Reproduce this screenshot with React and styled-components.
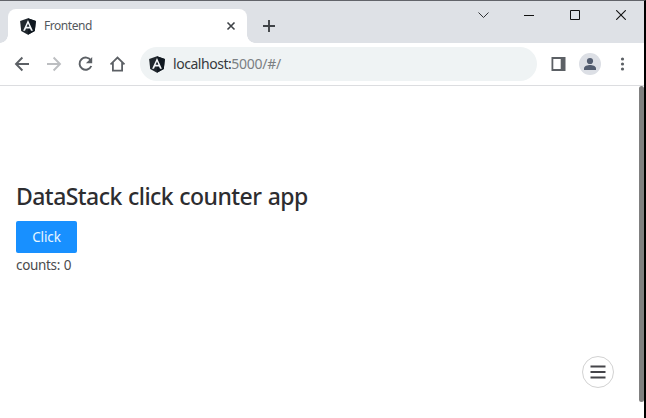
import React from "react";
import styled, { createGlobalStyle } from "styled-components";

const Global = createGlobalStyle`
  * { box-sizing: border-box; }
  body { margin: 0; background: #fff; font-family: "Noto Sans", "Open Sans", sans-serif; overflow: hidden; }
  svg { display: block; flex: none; }
`;

const Window = styled.div`
  width: 646px;
  height: 418px;
  display: flex;
  flex-direction: column;
  background: #fff;
  border-top: 1px solid #62646a;
  border-right: 2px solid #000;
`;

const TitleBar = styled.header`
  height: 42px;
  flex: none;
  display: flex;
  align-items: flex-end;
  padding-left: 8px;
  background: #dee1e6;
`;

const Tab = styled.div`
  position: relative;
  width: 239px;
  height: 34px;
  display: flex;
  align-items: center;
  padding: 0 11px 0 12px;
  background: #fff;
  border-radius: 8px 8px 0 0;
  &::before, &::after {
    content: "";
    position: absolute;
    bottom: 0;
    width: 8px;
    height: 8px;
  }
  &::before {
    left: -8px;
    background: radial-gradient(circle at 0 0, transparent 7.5px, #fff 8px);
  }
  &::after {
    right: -8px;
    background: radial-gradient(circle at 100% 0, transparent 7.5px, #fff 8px);
  }
`;

const TabTitle = styled.span`
  flex: 1;
  margin-left: 8px;
  font-size: 12px;
  line-height: 16px;
  letter-spacing: -0.45px;
  color: #54585c;
`;

const NewTab = styled.div`
  width: 28px;
  height: 34px;
  margin-left: 8px;
  display: flex;
  align-items: center;
  justify-content: center;
`;

const WindowControls = styled.div`
  align-self: flex-start;
  margin-left: auto;
  display: flex;
  height: 28px;
`;

const Control = styled.div`
  width: 46px;
  height: 28px;
  display: flex;
  align-items: center;
  justify-content: center;
`;

const Toolbar = styled.nav`
  height: 43px;
  flex: none;
  display: flex;
  align-items: center;
  padding: 0 11px 0 14px;
  border-bottom: 1px solid #dcdde0;
`;

const NavIcons = styled.div`
  display: flex;
  gap: 16px;
`;

const AddressBar = styled.div`
  width: 397px;
  height: 34px;
  margin-left: 14px;
  padding-left: 9px;
  display: flex;
  align-items: center;
  border-radius: 17px;
  background: #eff3f4;
`;

const Url = styled.span`
  margin-left: 8px;
  font-size: 14px;
  line-height: 20px;
  letter-spacing: -0.46px;
  color: #36393d;
`;

const UrlRest = styled.span`
  letter-spacing: -0.25px;
  color: #7b7f83;
`;

const Actions = styled.div`
  margin-left: auto;
  display: flex;
  align-items: center;
  gap: 12px;
`;

const Page = styled.main`
  flex: 1;
  min-height: 0;
  display: flex;
`;

const Content = styled.section`
  flex: 1;
  padding: 95px 0 0 16px;
`;

const Heading = styled.h1`
  margin: 0;
  font-size: 23px;
  font-weight: 500;
  line-height: 30px;
  letter-spacing: -0.55px;
  word-spacing: 0.8px;
  color: #2d2d30;
  white-space: nowrap;
`;

const ClickButton = styled.button`
  display: block;
  width: 61px;
  height: 32px;
  margin: 10px 0 0;
  padding: 0;
  border: 0;
  border-radius: 2px;
  background: #1890ff;
  color: #e8f7ff;
  font: 13.5px/32px "Noto Sans", sans-serif;
  letter-spacing: -0.1px;
`;

const Counter = styled.p`
  margin: 1px 0 0;
  font-size: 13.5px;
  line-height: 22px;
  letter-spacing: -0.32px;
  word-spacing: 0.5px;
  color: #4b4b4d;
`;

const Scrollbar = styled.div`
  width: 5px;
  height: 316px;
  border-radius: 3px;
  background: #808080;
`;

const MenuButton = styled.div`
  position: absolute;
  left: 582px;
  top: 356px;
  width: 32px;
  height: 32px;
  display: flex;
  align-items: center;
  justify-content: center;
  border: 1px solid #d2d2d2;
  border-radius: 50%;
  background: #fff;
`;

const Shield = () => (
  <svg width="16" height="17" viewBox="0 0 16 17">
    <path d="M8 0.2 15.9 2.9 14.8 13 8 16.7 1.2 13 0.1 2.9Z" fill="#20272d" />
    <path d="M8 0.2 15.9 2.9 14.8 13 8 16.7Z" fill="#101820" />
    <path fillRule="evenodd" d="M8 2 3.1 12.8H5L6 10.4H10L11 12.8H12.9ZM8 5.6 9.4 8.8H6.6Z" fill="#f4f7f9" />
  </svg>
);

const Icon = ({ children, color = "#5c6065", size = 16, width = 1.9 }) => (
  <svg width={size} height={size} viewBox={`0 0 ${size} ${size}`} fill="none" stroke={color} strokeWidth={width}>
    {children}
  </svg>
);

export default function App() {
  return (
    <Window>
      <Global />
      <TitleBar>
        <Tab>
          <Shield />
          <TabTitle>Frontend</TabTitle>
          <Icon size={10} color="#3f4347" width={1.6}><path d="M1.5 1.5 8.5 8.5M8.5 1.5 1.5 8.5" /></Icon>
        </Tab>
        <NewTab>
          <Icon size={12} color="#3f4347" width={1.9}><path d="M6 0V12M0 6H12" /></Icon>
        </NewTab>
        <WindowControls>
          <Control><Icon size={12} color="#303236" width={1}><path d="M1.5 3.5 6.5 8.5 11.5 3.5" /></Icon></Control>
          <Control><Icon size={10} color="#111" width={1}><path d="M0 5.5H10" /></Icon></Control>
          <Control><Icon size={10} color="#111" width={1}><path d="M.5.5H9.5V9.5H.5Z" /></Icon></Control>
          <Control><Icon size={10} color="#111" width={1.1}><path d="M.2.2 9.8 9.8M9.8.2.2 9.8" /></Icon></Control>
        </WindowControls>
      </TitleBar>
      <Toolbar>
        <NavIcons>
          <Icon><path d="M15 8H2.2M8.4 1.5 2 8 8.4 14.5" /></Icon>
          <Icon color="#bcbec1"><path d="M1 8H13.8M7.6 1.5 14 8 7.6 14.5" /></Icon>
          <Icon><path d="M12.9 4.5A6.1 6.1 0 1 0 13.3 10" /><path d="M14.2 1V7.3H7.9Z" fill="#5c6065" stroke="none" /></Icon>
          <Icon width={1.8}><path d="M.5 8.4 7.5 1.6 14.5 8.4M2.9 6.5V14.7H12.1V6.5" /></Icon>
        </NavIcons>
        <AddressBar>
          <Shield />
          <Url>localhost:<UrlRest>5000/#/</UrlRest></Url>
        </AddressBar>
        <Actions>
          <svg width="16" height="14" viewBox="0 0 16 14">
            <path fillRule="evenodd" d="M0.5 0H14.5V14H0.5ZM2.3 2V12H9.7V2Z" fill="#5c6065" />
          </svg>
          <svg width="22" height="22" viewBox="0 0 22 22">
            <circle cx="11" cy="11" r="11" fill="#dcdfe5" />
            <circle cx="11" cy="8" r="3.1" fill="#535d70" />
            <path d="M5 17V15.3C5 13 8.6 11.9 11 11.9S17 13 17 15.3V17Z" fill="#535d70" />
          </svg>
          <svg width="20" height="16" viewBox="0 0 20 16" fill="#5c6065">
            <circle cx="9.5" cy="3" r="1.6" /><circle cx="9.5" cy="8" r="1.6" /><circle cx="9.5" cy="13" r="1.6" />
          </svg>
        </Actions>
      </Toolbar>
      <Page>
        <Content>
          <Heading>DataStack click counter app</Heading>
          <ClickButton>Click</ClickButton>
          <Counter>counts: 0</Counter>
        </Content>
        <Scrollbar />
      </Page>
      <MenuButton>
        <Icon color="#444449" width={1.9}><path d="M.5 2.5H15.5M.5 8H15.5M.5 13.5H15.5" /></Icon>
      </MenuButton>
    </Window>
  );
}
